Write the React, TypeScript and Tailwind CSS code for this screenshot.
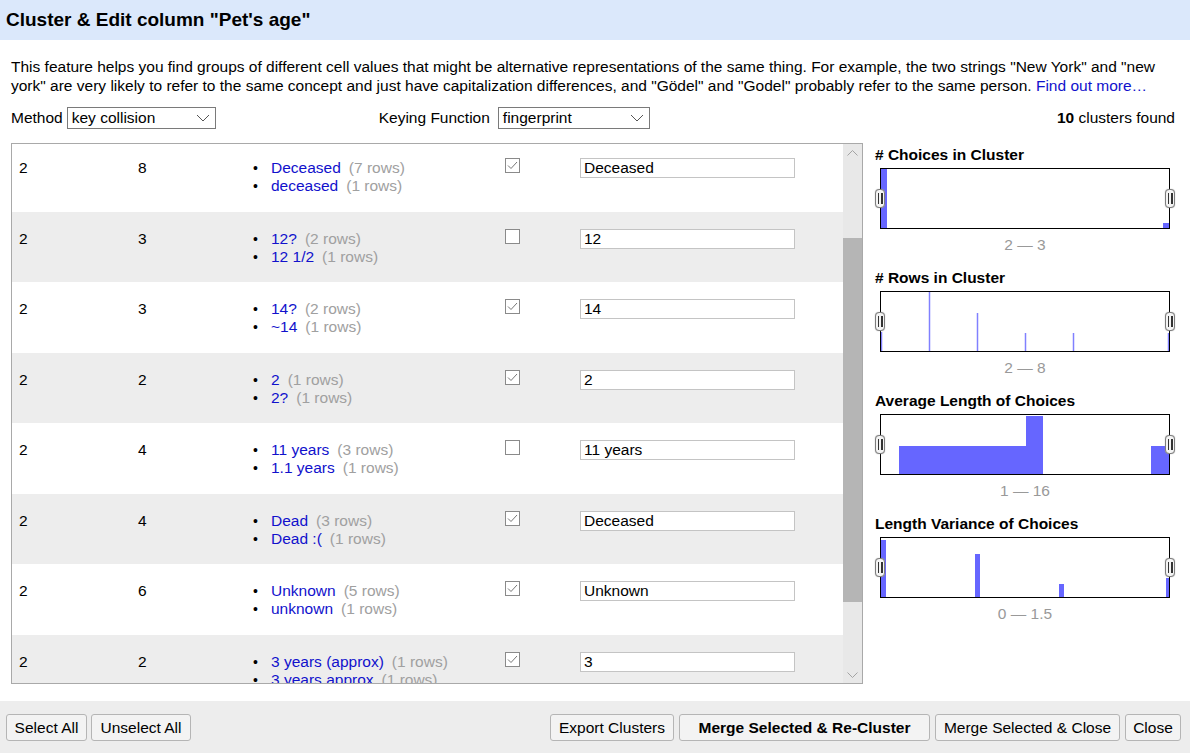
import React from 'react';

interface Choice {
    value: string;
    rows: number;
}

interface Cluster {
    size: number;
    rowCount: number;
    choices: Choice[];
    checked: boolean;
    newValue: string;
}

const clusters: Cluster[] = [
    { size: 2, rowCount: 8, choices: [{ value: 'Deceased', rows: 7 }, { value: 'deceased', rows: 1 }], checked: true, newValue: 'Deceased' },
    { size: 2, rowCount: 3, choices: [{ value: '12?', rows: 2 }, { value: '12 1/2', rows: 1 }], checked: false, newValue: '12' },
    { size: 2, rowCount: 3, choices: [{ value: '14?', rows: 2 }, { value: '~14', rows: 1 }], checked: true, newValue: '14' },
    { size: 2, rowCount: 2, choices: [{ value: '2', rows: 1 }, { value: '2?', rows: 1 }], checked: true, newValue: '2' },
    { size: 2, rowCount: 4, choices: [{ value: '11 years', rows: 3 }, { value: '1.1 years', rows: 1 }], checked: false, newValue: '11 years' },
    { size: 2, rowCount: 4, choices: [{ value: 'Dead', rows: 3 }, { value: 'Dead :(', rows: 1 }], checked: true, newValue: 'Deceased' },
    { size: 2, rowCount: 6, choices: [{ value: 'Unknown', rows: 5 }, { value: 'unknown', rows: 1 }], checked: true, newValue: 'Unknown' },
    { size: 2, rowCount: 2, choices: [{ value: '3 years (approx)', rows: 1 }, { value: '3 years approx', rows: 1 }], checked: true, newValue: '3' },
];

type Bar = { x: number; w: number; y: number };

const histograms: { title: string; range: string; bars: Bar[]; lines?: boolean }[] = [
    { title: '# Choices in Cluster', range: '2 — 3', bars: [{ x: 0, w: 6, y: 0 }, { x: 282, w: 6, y: 54 }] },
    {
        title: '# Rows in Cluster',
        range: '2 — 8',
        lines: true,
        bars: [{ x: 0.5, w: 1, y: 40 }, { x: 48.5, w: 1, y: 0 }, { x: 96.5, w: 1, y: 21 }, { x: 144.5, w: 1, y: 41 }, { x: 192.5, w: 1, y: 41 }, { x: 287.5, w: 1, y: 41 }],
    },
    { title: 'Average Length of Choices', range: '1 — 16', bars: [{ x: 18, w: 128, y: 31 }, { x: 145, w: 17, y: 1 }, { x: 270, w: 18, y: 31 }] },
    { title: 'Length Variance of Choices', range: '0 — 1.5', bars: [{ x: 0, w: 5, y: 2 }, { x: 94, w: 5, y: 16 }, { x: 178, w: 5, y: 46 }, { x: 285, w: 3, y: 40 }] },
];

const Chevron = () => (
    <svg width="14" height="8" viewBox="0 0 14 8">
        <path d="M1 1 L7 7 L13 1" fill="none" stroke="#555" strokeWidth="1" />
    </svg>
);

const FakeSelect = ({ value, width }: { value: string; width: string }) => (
    <div className={`${width} h-[22px] border border-[#7a7a7a] bg-white flex items-center justify-between pl-[4px] pr-[5px]`}>
        <span>{value}</span>
        <Chevron />
    </div>
);

const Checkbox = ({ checked }: { checked: boolean }) => (
    <div className="w-[15px] h-[15px] border border-[#8a8a8a] bg-white flex items-center justify-center">
        {checked && (
            <svg width="11" height="9" viewBox="0 0 11 9">
                <path d="M1 4.5 L4 7.5 L10 1" fill="none" stroke="#777" strokeWidth="1" />
            </svg>
        )}
    </div>
);

const Handle = () => (
    <div className="w-[10px] h-[19px] rounded-[4px] border border-[#7d7d7d] bg-[#f4f4f4] flex items-center justify-center gap-[2px] shadow-[0_0_1px_#999]">
        <div className="w-[1.5px] h-[11px] bg-[#333]" />
        <div className="w-[1.5px] h-[11px] bg-[#333]" />
    </div>
);

const Histogram = ({ title, range, bars, lines }: { title: string; range: string; bars: Bar[]; lines?: boolean }) => (
    <div className="pb-[15px]">
        <div className="font-bold h-[18px] leading-[18px]">{title}</div>
        <div className="relative mt-[4px] ml-[5px] w-[290px] h-[61px] border border-black bg-white">
            <svg width="288" height="59" viewBox="0 0 288 59" className="block">
                {bars.map((b, i) =>
                    lines ? (
                        <line key={i} x1={b.x} x2={b.x} y1={b.y} y2={59} stroke="#8080ff" strokeWidth="1.5" />
                    ) : (
                        <rect key={i} x={b.x} y={b.y} width={b.w} height={59 - b.y} fill="#6666ff" />
                    )
                )}
            </svg>
            <div className="absolute left-[-6px] top-[20px]"><Handle /></div>
            <div className="absolute right-[-6px] top-[20px]"><Handle /></div>
        </div>
        <div className="mt-[7px] ml-[5px] w-[290px] text-center text-[#999] h-[18px] leading-[18px]">{range}</div>
    </div>
);

const ClusterRow = ({ cluster, index }: { cluster: Cluster; index: number }) => (
    <div className={`flex h-[70.5px] pt-[18px] ${index % 2 === 1 ? 'bg-[#ededed]' : 'bg-white'}`}>
        <div className="w-[126px] pl-[7px] leading-[18px]">{cluster.size}</div>
        <div className="w-[115px] leading-[18px]">{cluster.rowCount}</div>
        <div className="w-[252px]">
            {cluster.choices.map(c => (
                <div key={c.value} className="flex leading-[18px] whitespace-nowrap">
                    <span className="w-[18px] text-[14px]">•</span>
                    <span className="text-[#1111cc]">{c.value}</span>
                    <span className="ml-[8px] text-[#a0a0a0]">({c.rows} rows)</span>
                </div>
            ))}
        </div>
        <div className="w-[75px] -mt-[1px]">
            <Checkbox checked={cluster.checked} />
        </div>
        <div className="-mt-[1px]">
            <div className="w-[215px] h-[20px] border border-[#c4c4c4] bg-white pl-[3px] leading-[18px]">{cluster.newValue}</div>
        </div>
    </div>
);

const Button = ({ children, width, bold }: { children: React.ReactNode; width: string; bold?: boolean }) => (
    <button
        type="button"
        className={`${width} h-[27px] rounded-[3px] border border-[#b5b5b5] bg-[#f3f3f3] text-[15.5px] text-black ${bold ? 'font-bold' : ''}`}
    >
        {children}
    </button>
);

export default function App() {
    return (
        <div className="w-[1190px] h-[753px] bg-white flex flex-col text-[15.5px] text-black overflow-hidden" style={{ fontFamily: '"Liberation Sans", Arial, sans-serif' }}>
            <div className="h-[40px] bg-[#dbe8fb] flex items-center pl-[6px] text-[19px] font-bold shrink-0">
                Cluster &amp; Edit column "Pet's age"
            </div>

            <div className="px-[11px] mt-[17px] leading-[19px]">
                This feature helps you find groups of different cell values that might be alternative representations of the same thing. For example, the two strings "New York" and "new york" are very likely to refer to the same concept and just have capitalization differences, and "Gödel" and "Godel" probably refer to the same person.{' '}
                <span className="text-[#1111cc]">Find out more…</span>
            </div>

            <div className="flex items-center px-[11px] mt-[12px] h-[22px]">
                <span className="mr-[4px]">Method</span>
                <FakeSelect value="key collision" width="w-[149px]" />
                <span className="ml-[163px] mr-[8px]">Keying Function</span>
                <FakeSelect value="fingerprint" width="w-[152px]" />
                <span className="ml-auto pr-[4px]"><b>10</b> clusters found</span>
            </div>

            <div className="flex mt-[14px] pl-[11px]">
                <div className="w-[852px] h-[541px] border border-[#a9a9a9] flex">
                    <div className="flex-1 overflow-hidden">
                        <div className="-mt-[3px]">
                            {clusters.map((c, i) => (
                                <ClusterRow key={i} cluster={c} index={i} />
                            ))}
                        </div>
                    </div>
                    <div className="w-[19px] bg-[#e8e8e8] flex flex-col items-center">
                        <div className="h-[17px] flex items-center justify-center">
                            <svg width="11" height="6" viewBox="0 0 11 6"><path d="M0.5 5.5 L5.5 0.5 L10.5 5.5" fill="none" stroke="#a3a3a3" strokeWidth="1" /></svg>
                        </div>
                        <div className="mt-[77px] w-[19px] h-[364px] bg-[#b5b5b5]" />
                        <div className="mt-auto h-[17px] flex items-center justify-center">
                            <svg width="11" height="6" viewBox="0 0 11 6"><path d="M0.5 0.5 L5.5 5.5 L10.5 0.5" fill="none" stroke="#a3a3a3" strokeWidth="1" /></svg>
                        </div>
                    </div>
                </div>
                <div className="pl-[12px] pt-[3px]">
                    {histograms.map(h => (
                        <Histogram key={h.title} {...h} />
                    ))}
                </div>
            </div>

            <div className="mt-auto h-[52px] bg-[#ededed] flex items-start pt-[13px] px-[6px] gap-[4px]">
                <Button width="w-[81px]">Select All</Button>
                <Button width="w-[100px]">Unselect All</Button>
                <div className="ml-auto flex gap-[5px] pr-[3px]">
                    <Button width="w-[124px]">Export Clusters</Button>
                    <Button width="w-[251px]" bold>Merge Selected &amp; Re-Cluster</Button>
                    <Button width="w-[185px]">Merge Selected &amp; Close</Button>
                    <Button width="w-[56px]">Close</Button>
                </div>
            </div>
        </div>
    );
}
